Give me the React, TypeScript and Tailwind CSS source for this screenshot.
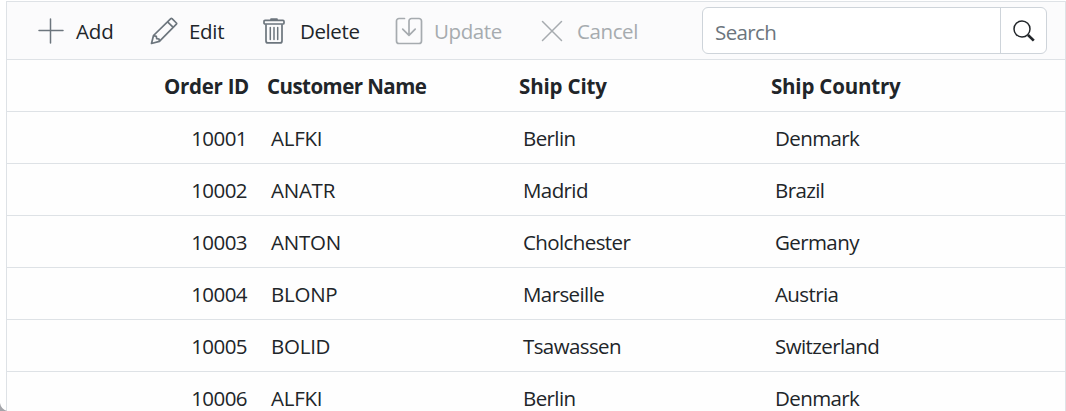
import React from "react";

type Order = { id: number; name: string; city: string; country: string };

const orders: Order[] = [
  { id: 10001, name: "ALFKI", city: "Berlin", country: "Denmark" },
  { id: 10002, name: "ANATR", city: "Madrid", country: "Brazil" },
  { id: 10003, name: "ANTON", city: "Cholchester", country: "Germany" },
  { id: 10004, name: "BLONP", city: "Marseille", country: "Austria" },
  { id: 10005, name: "BOLID", city: "Tsawassen", country: "Switzerland" },
  { id: 10006, name: "ALFKI", city: "Berlin", country: "Denmark" },
];

function AddIcon() {
  return (
    <svg width="26" height="26" viewBox="0 0 26 26" fill="none" stroke="currentColor" strokeWidth="1.5" strokeLinecap="round">
      <path d="M12.5 1v24M1 12.5h24" />
    </svg>
  );
}

function EditIcon() {
  return (
    <svg width="28" height="28" viewBox="0 0 28 28" fill="none" stroke="currentColor" strokeWidth="1.7" strokeLinejoin="round">
      <path d="M1.5 26.5 3.5 18.5 20.8 1.6a.9.9 0 0 1 1.2 0L26.4 6a.9.9 0 0 1 0 1.2L9.4 24.4Z" />
      <path d="M17.6 4.8 23.2 10.4M3.5 18.7l2.8.6.4 2.3 2.3.4.5 2.4" />
    </svg>
  );
}

function DeleteIcon() {
  return (
    <svg width="22" height="26" viewBox="0 0 22 26" fill="none" stroke="currentColor" strokeWidth="1.7" strokeLinejoin="round">
      <path d="M8 2.4V1.2h6v1.2" fill="currentColor" />
      <rect x="1" y="2.4" width="20" height="3.6" rx="1" />
      <path d="M3 6.2v16.7a2 2 0 0 0 2 2h12a2 2 0 0 0 2-2V6.2" />
      <path d="M7.3 9.5v12M11 9.5v12M14.7 9.5v12" strokeLinecap="round" strokeWidth="1.5" />
    </svg>
  );
}

function UpdateIcon() {
  return (
    <svg width="28" height="28" viewBox="0 0 28 28" fill="none" stroke="currentColor" strokeWidth="1.7" strokeLinecap="round" strokeLinejoin="round">
      <path d="M9.5 1.5H4a2.5 2.5 0 0 0-2.5 2.5v20A2.5 2.5 0 0 0 4 26.5h20a2.5 2.5 0 0 0 2.5-2.5V4A2.5 2.5 0 0 0 24 1.5h-7.5a2.5 2.5 0 0 0-2.5 2.5v14M7.7 12.2 14 18.3l6.2-6.1" />
    </svg>
  );
}

function CancelIcon() {
  return (
    <svg width="22" height="22" viewBox="0 0 22 22" fill="none" stroke="currentColor" strokeWidth="1.5" strokeLinecap="round">
      <path d="m1.5 1.5 19 19M20.5 1.5l-19 19" />
    </svg>
  );
}

function SearchIcon() {
  return (
    <svg width="22" height="22" viewBox="0 0 22 22" fill="none" stroke="currentColor" strokeWidth="1.5">
      <circle cx="9" cy="9" r="8" />
      <path d="m15 15 5.8 5.6" strokeWidth="2.7" />
    </svg>
  );
}

function Toolbar() {
  return (
    <div className="flex h-[58px] shrink-0 items-center border-b border-[#dee2e6] bg-[#fbfbfc] pr-[18px]">
      <button className="ml-[31px] flex w-[112px] items-center text-[#6c757d]">
        <AddIcon />
        <span className="ml-[12px] pt-px tracking-[-0.1px] text-[#212529]">Add</span>
      </button>
      <button className="flex w-[113px] items-center text-[#6c757d]">
        <EditIcon />
        <span className="ml-[11px] pt-px tracking-[-0.3px] text-[#212529]">Edit</span>
      </button>
      <button className="flex w-[132px] items-center text-[#6c757d]">
        <DeleteIcon />
        <span className="ml-[15px] pt-px tracking-[-0.4px] text-[#212529]">Delete</span>
      </button>
      <button disabled className="flex w-[146px] items-center text-[#a6abaf]">
        <UpdateIcon />
        <span className="ml-[11px] pt-px tracking-[-0.4px]">Update</span>
      </button>
      <button disabled className="flex items-center text-[#a6abaf]">
        <CancelIcon />
        <span className="ml-[14px] pt-px tracking-[-0.4px]">Cancel</span>
      </button>
      <div className="ml-auto flex h-[47px] w-[345px] overflow-hidden rounded-[6px] border border-[#ced4da] bg-white">
        <input
          aria-label="Search"
          placeholder="Search"
          className="h-full min-w-0 flex-1 px-3 pt-[2px] tracking-[-0.6px] outline-none placeholder:text-[#6c757d]"
        />
        <button aria-label="Find" className="flex w-[46px] items-center justify-center border-l border-[#ced4da] text-[#212529]">
          <SearchIcon />
        </button>
      </div>
    </div>
  );
}

const columns = "grid grid-cols-[252px_252px_252px_1fr] items-center h-[52px] shrink-0 border-b border-[#dee2e6]";

export default function App() {
  return (
    <div className="relative h-[411px] w-[1066px] overflow-hidden bg-white pl-[6px] pt-px font-['Open_Sans','Noto_Sans',sans-serif] text-[20.5px] leading-[28px] text-[#212529]">
      <div className="flex h-[430px] flex-col border border-[#dee2e6] bg-[#fefefe]">
        <Toolbar />
        <div className={columns}>
          <div className="pr-[10px] text-right font-bold tracking-[-0.3px]">Order ID</div>
          <div className="pl-[8px] font-bold tracking-[-0.55px]">Customer Name</div>
          <div className="pl-[8px] font-bold tracking-[-0.15px]">Ship City</div>
          <div className="pl-[8px] font-bold tracking-[-0.2px]">Ship Country</div>
        </div>
        {orders.map((order) => (
          <div key={order.id} className={columns}>
            <div className="pr-[12px] text-right tracking-[-0.55px]">{order.id}</div>
            <div className="pl-[12px] tracking-[-0.25px]">{order.name}</div>
            <div className="pl-[12px] tracking-[-0.6px]">{order.city}</div>
            <div className="pl-[12px] tracking-[-0.6px]">{order.country}</div>
          </div>
        ))}
      </div>
      <svg className="absolute bottom-0 left-0" width="7" height="8" viewBox="0 0 7 8">
        <path d="M0 0Q1 6 7 8H0Z" fill="#a4a5aa" />
      </svg>
    </div>
  );
}
